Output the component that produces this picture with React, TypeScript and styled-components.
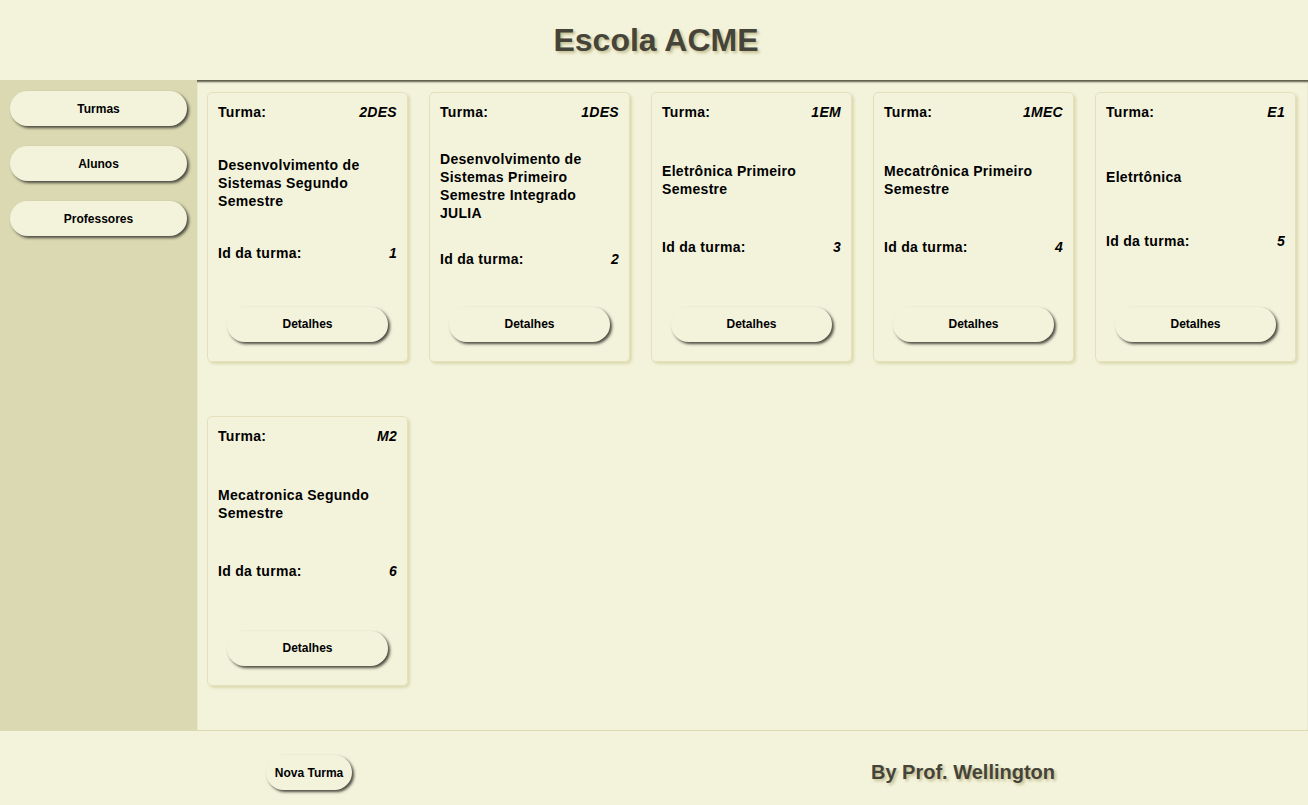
import React from "react";
import styled, { createGlobalStyle } from "styled-components";

const GlobalStyle = createGlobalStyle`
  html, body { margin: 0; padding: 0; }
  body {
    background: #f3f3dc;
    font-family: "Liberation Sans", Arial, sans-serif;
    color: #000;
  }
  * { box-sizing: border-box; }
`;

const Page = styled.div`
  height: 100vh;
  display: grid;
  grid-template-rows: 80px 1fr 75px;
  background: #f3f3dc;
`;

const Header = styled.header`
  display: flex;
  align-items: center;
  justify-content: center;
`;

const Title = styled.h1`
  margin: 0 0 0 4px;
  font-size: 32px;
  font-weight: bold;
  color: #45443a;
  text-shadow: 2px 2px 3px #c3bd8e;
`;

const Middle = styled.div`
  display: grid;
  grid-template-columns: 197px 1fr;
  min-height: 0;
`;

const Sidebar = styled.nav`
  background: #dbd9b1;
  padding: 11px 10px;
  display: flex;
  flex-direction: column;
  gap: 20px;
`;

const PillButton = styled.button`
  height: 35px;
  border: none;
  border-radius: 18px;
  background: #f3f3dc;
  box-shadow: 2px 2px 3px #4a4a40;
  font-family: "Liberation Sans", Arial, sans-serif;
  font-size: 12px;
  font-weight: bold;
  color: #000;
  cursor: pointer;
  padding: 0 9px;
`;

const NavButton = styled(PillButton)`
  width: 100%;
`;

const Main = styled.main`
  box-shadow: inset 0 3px 2px -1px #5a5a48;
  padding: 12px 10px;
  display: flex;
  flex-wrap: wrap;
  align-content: flex-start;
  column-gap: 21px;
  row-gap: 54px;
  overflow: hidden;
`;

const Card = styled.div`
  width: 201px;
  height: 270px;
  border: 1px solid #e3e0bb;
  border-radius: 5px;
  box-shadow: 2px 2px 3px #dcd9ae;
  padding: 10px 10px 9px;
  display: flex;
  flex-direction: column;
  justify-content: space-between;
  letter-spacing: 0.3px;
`;

const Row = styled.div`
  display: flex;
  justify-content: space-between;
  align-items: center;
  font-size: 14px;
  font-weight: bold;
  line-height: 18px;
`;

const Value = styled.span`
  font-style: italic;
`;

const Description = styled.div`
  font-size: 14px;
  font-weight: bold;
  line-height: 18px;
`;

const CardFooter = styled.div`
  padding: 10px 0;
  display: flex;
  justify-content: center;
  letter-spacing: normal;
`;

const DetailsButton = styled(PillButton)`
  width: 90%;
`;

const Footer = styled.footer`
  border-top: 1px solid #dbd9b1;
  display: grid;
  grid-template-columns: 1fr 1fr;
  align-items: center;
  justify-items: center;
  padding-top: 9px;

  & > * {
    margin-right: 36px;
  }
`;

const Credit = styled.div`
  font-size: 20px;
  font-weight: bold;
  color: #45443a;
  text-shadow: 2px 2px 3px #c3bd8e;
`;

type Turma = { code: string; name: string; id: number };

const turmas: Turma[] = [
  { code: "2DES", name: "Desenvolvimento de Sistemas Segundo Semestre", id: 1 },
  { code: "1DES", name: "Desenvolvimento de Sistemas Primeiro Semestre Integrado JULIA", id: 2 },
  { code: "1EM", name: "Eletrônica Primeiro Semestre", id: 3 },
  { code: "1MEC", name: "Mecatrônica Primeiro Semestre", id: 4 },
  { code: "E1", name: "Eletrtônica", id: 5 },
  { code: "M2", name: "Mecatronica Segundo Semestre", id: 6 },
];

export default function App() {
  return (
    <>
      <GlobalStyle />
      <Page>
        <Header>
          <Title>Escola ACME</Title>
        </Header>
        <Middle>
          <Sidebar>
            <NavButton>Turmas</NavButton>
            <NavButton>Alunos</NavButton>
            <NavButton>Professores</NavButton>
          </Sidebar>
          <Main>
            {turmas.map((t) => (
              <Card key={t.id}>
                <Row>
                  <span>Turma:</span>
                  <Value>{t.code}</Value>
                </Row>
                <Description>{t.name}</Description>
                <Row>
                  <span>Id da turma:</span>
                  <Value>{t.id}</Value>
                </Row>
                <CardFooter>
                  <DetailsButton>Detalhes</DetailsButton>
                </CardFooter>
              </Card>
            ))}
          </Main>
        </Middle>
        <Footer>
          <PillButton>Nova Turma</PillButton>
          <Credit>By Prof. Wellington</Credit>
        </Footer>
      </Page>
    </>
  );
}
